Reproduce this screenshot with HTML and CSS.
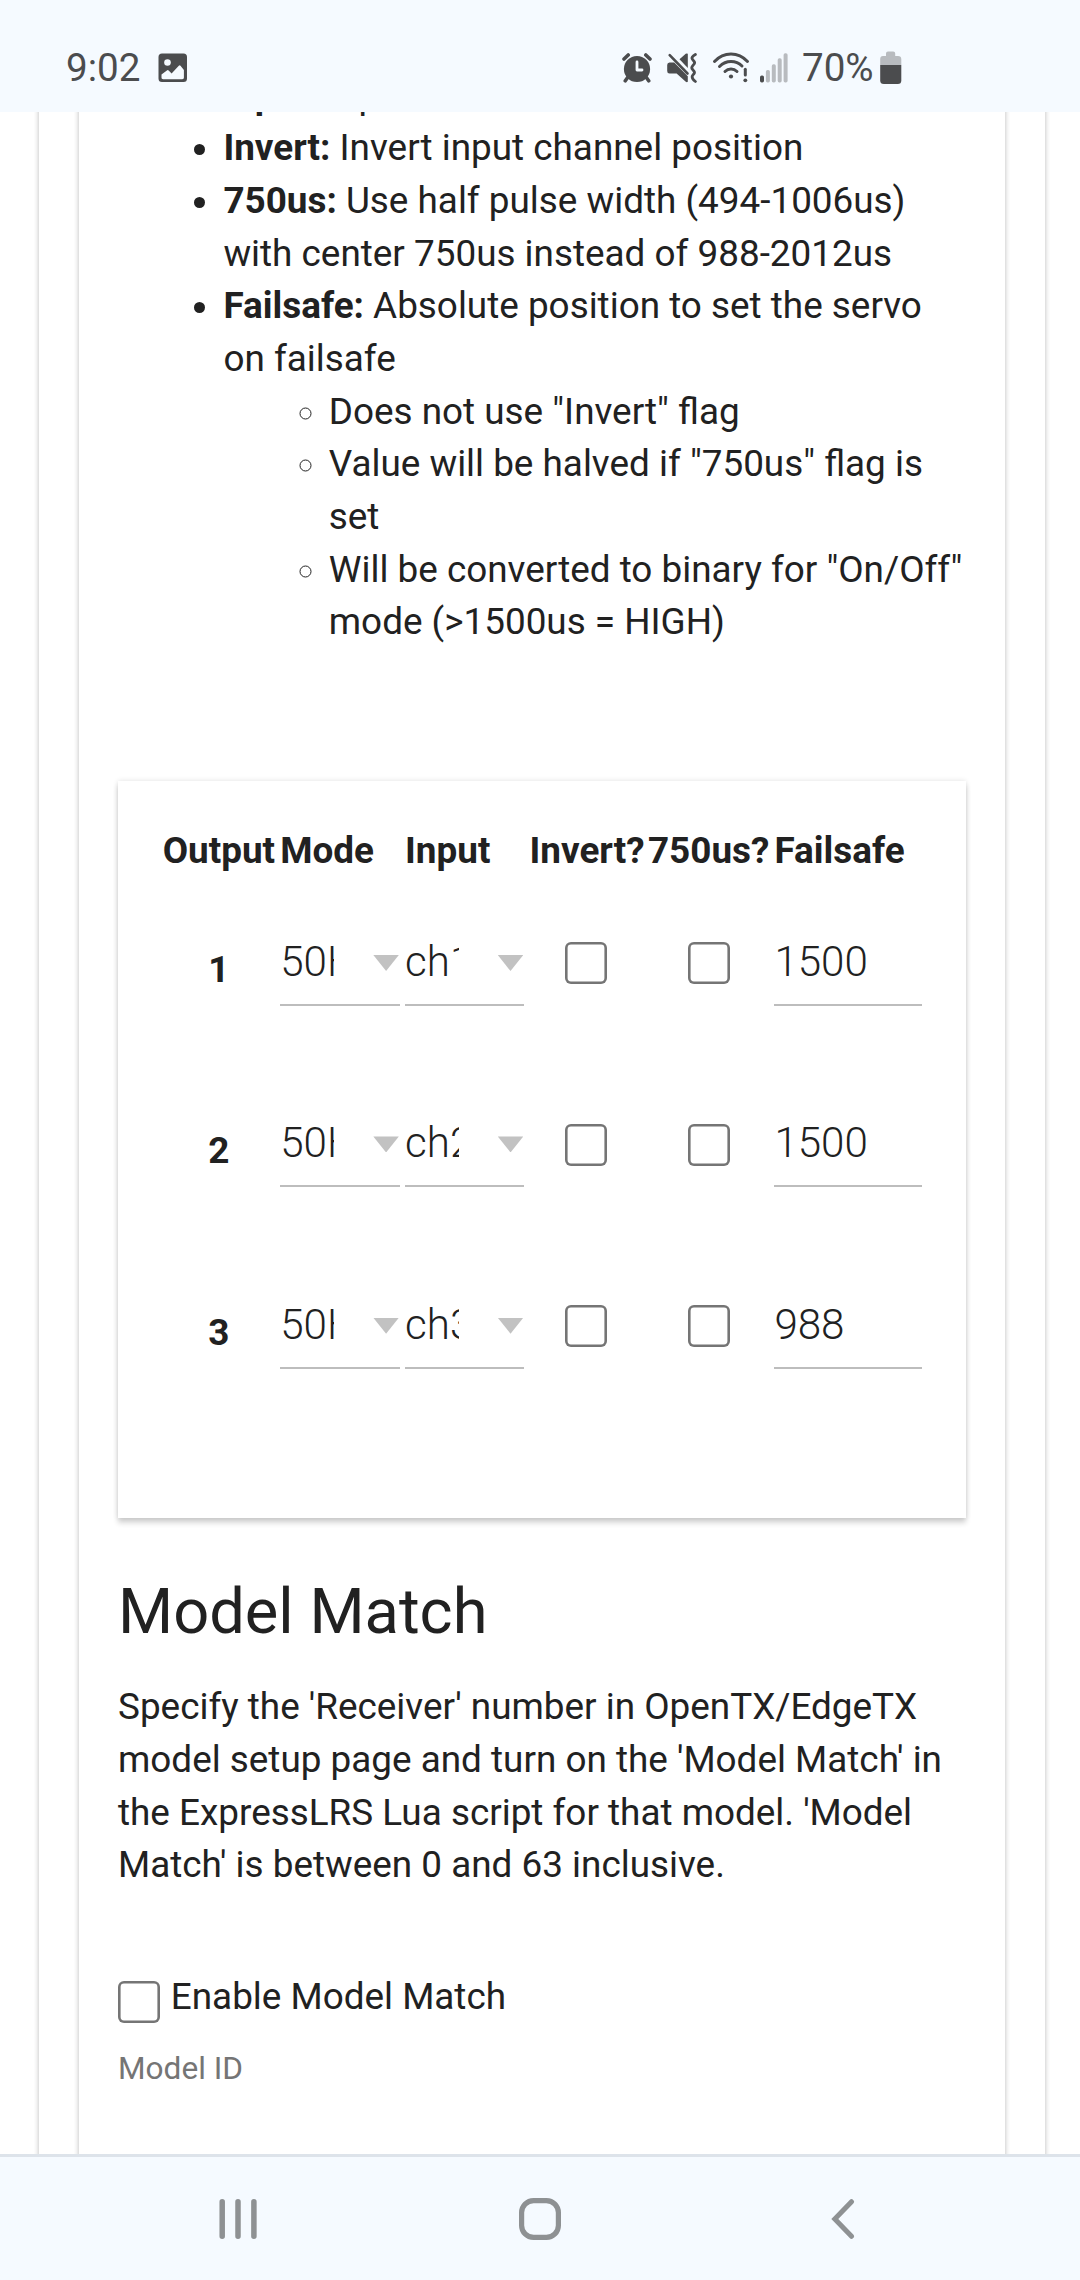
FILE: index.html
```html
<!DOCTYPE html>
<html lang="en">
<head>
<meta charset="utf-8">
<title>ExpressLRS</title>
<link rel="stylesheet" href="styles.css">
</head>
<body>
<header class="status">
  <span class="status-text clock">9:02</span>
  <svg class="ic-photo" width="30" height="30" viewBox="0 0 30 30"><path fill="#4b4c4e" fill-rule="evenodd" d="M4 .5h21.500a3.500 3.500 0 0 1 3.500 3.500v21.500a3.500 3.500 0 0 1-3.500 3.500H4A3.500 3.500 0 0 1 .5 25.500V4A3.500 3.500 0 0 1 4 .5zM3.500 21.500v3c0 1 .6 1.700 1.700 1.700h19c1.100 0 1.700-.7 1.700-1.700V17l-3.400-4.200q-.8-1-1.700 0l-7.200 7.700-3-3q-.8-.8-1.700 0z"/><circle cx="9.500" cy="9.500" r="3.300" fill="#f5faff"/></svg>
  <span class="spacer"></span>
  <svg class="ic-alarm" width="30" height="30" viewBox="0 0 30 30"><circle cx="15" cy="16" r="13.100" fill="#4b4c4e"/><g stroke="#4b4c4e" stroke-width="3.600" stroke-linecap="round" fill="none"><path d="M2 6 6.200 2M28 6l-4.200-4M6 24l-2.700 3.800M24 24l2.700 3.800"/></g><path d="M15 9v8h5" stroke="#f5faff" stroke-width="2.800" stroke-linecap="round" stroke-linejoin="round" fill="none"/></svg>
  <svg class="ic-mute" width="30" height="30" viewBox="0 0 30 30"><g fill="#4b4c4e"><path d="M2.500 9.500h4.700l13.600 13.700v5.600q-.9.800-2 0L9.600 20.500H2.500Q.2 20.500.2 18v-6q0-2.500 2.300-2.500z"/><path d="M12.500 6.200 18.700.8q1.100-.8 2.100 0v14.100z"/></g><path d="M2.700 2.200 20.500 20.500" stroke="#4b4c4e" stroke-width="2.600" stroke-linecap="round"/><path d="M28.400 1.500q-4.600 2.500-3 4.700l1.800 2.400q1 1.500-.6 3l-1 1.200q-1.600 2 0 3.700l1.200 1.500q1.300 1.500 0 3l-1.200 1.500q-1.600 2.600 2.800 6" fill="none" stroke="#4b4c4e" stroke-width="2.800" stroke-linecap="round"/></svg>
  <svg class="ic-wifi" width="38" height="32" viewBox="0 0 38 32"><g fill="none" stroke="#4b4c4e" stroke-width="3" stroke-linecap="round"><path d="M2.500 9.500Q9.500 2 19 2T35.500 9.500M7.500 14.500q5-5 11.500-5t11 4.500M13 19.500q2.500-2.500 6-2.500t6 2.500"/><path d="M33.300 17.200v5.800"/></g><circle cx="19" cy="24.500" r="2.100" fill="#4b4c4e"/><circle cx="33.300" cy="28.300" r="1.900" fill="#4b4c4e"/></svg>
  <svg class="ic-signal" width="28" height="30" viewBox="0 0 28 30"><g fill="#b8bbbf"><rect x="5.900" y="17" width="4" height="12.500" rx="1.700"/><rect x="11.800" y="11.200" width="4" height="18.300" rx="1.700"/><rect x="17.700" y="5.200" width="4" height="24.300" rx="1.700"/><rect x="23.600" y=".2" width="4" height="29.300" rx="1.700"/></g><rect y="22.500" width="4" height="7" rx="1.700" fill="#4b4c4e"/></svg>
  <span class="status-text percent">70%</span>
  <svg class="ic-battery" width="22" height="34" viewBox="0 0 22 34"><path fill="#b8bbbf" d="M3 5h3V2.500Q6 .6 8 .6h5.200q2 0 2 1.900V5H18q3.300 0 3.300 3.300V14H.2V8.300Q.2 5 3 5z"/><path fill="#4b4c4e" d="M.2 14h21.100v15.500q0 3.500-3.500 3.500h-14Q.2 33 .2 29.500z"/></svg>
</header>

<main class="viewport">
  <div class="panel outer">
    <div class="panel inner">
      <ul class="notes">
        <li><b>Input:</b> Input channel from the handset</li>
        <li><b>Invert:</b> Invert input channel position</li>
        <li><b>750us:</b> Use half pulse width (494-1006us)<br>with center 750us instead of 988-2012us</li>
        <li><b>Failsafe:</b> Absolute position to set the servo<br>on failsafe
          <ul>
            <li>Does not use "Invert" flag</li>
            <li>Value will be halved if "750us" flag is<br>set</li>
            <li>Will be converted to binary for "On/Off"<br>mode (&gt;1500us = HIGH)</li>
          </ul>
        </li>
      </ul>

      <section class="panel outputs">
        <div class="row head"><span>Output</span><span>Mode</span><span>Input</span><span>Invert?</span><span>750us?</span><span>Failsafe</span></div>
        <div class="row">
          <b class="num">1</b>
          <div class="field select"><span>50Hz</span><i></i></div>
          <div class="field select"><span>ch1</span><i></i></div>
          <span class="check"></span><span class="check"></span>
          <div class="field">1500</div>
        </div>
        <div class="row">
          <b class="num">2</b>
          <div class="field select"><span>50Hz</span><i></i></div>
          <div class="field select"><span>ch2</span><i></i></div>
          <span class="check"></span><span class="check"></span>
          <div class="field">1500</div>
        </div>
        <div class="row">
          <b class="num">3</b>
          <div class="field select"><span>50Hz</span><i></i></div>
          <div class="field select"><span>ch3</span><i></i></div>
          <span class="check"></span><span class="check"></span>
          <div class="field">988</div>
        </div>
      </section>

      <h2>Model Match</h2>
      <p>Specify the 'Receiver' number in OpenTX/EdgeTX<br>model setup page and turn on the 'Model Match' in<br>the ExpressLRS Lua script for that model. 'Model<br>Match' is between 0 and 63 inclusive.</p>
      <div class="enable"><span class="check"></span><span>Enable Model Match</span></div>
      <div class="label">Model ID</div>
    </div>
  </div>
</main>

<nav class="navbar">
  <svg class="nav-recents" width="38" height="42" viewBox="0 0 38 42"><path d="M3.200 3.700v34.600M19 3.700v34.600M34.900 3.700v34.600" stroke="#8e9193" stroke-width="5.500" stroke-linecap="round"/></svg>
  <svg class="nav-home" width="42" height="42" viewBox="0 0 42 42"><rect x="2.600" y="2.600" width="36.800" height="36.800" rx="12" fill="none" stroke="#8e9193" stroke-width="5.200"/></svg>
  <svg class="nav-back" width="24" height="42" viewBox="0 0 24 42"><path d="M20.500 3.700 3.800 21l16.700 17.300" fill="none" stroke="#8e9193" stroke-width="5" stroke-linecap="round"/></svg>
</nav>
</body>
</html>
```
FILE: styles.css
```css
* { box-sizing: border-box; }

body {
  margin: 0;
  width: 1080px;
  height: 2280px;
  display: flex;
  flex-direction: column;
  overflow: hidden;
  background: #fff;
  color: #212121;
  font-family: Roboto, "Liberation Sans", sans-serif;
  font-size: 36.87px;
  line-height: 52.67px;
}

svg { display: block; flex: none; }

/* Status bar */
.status {
  flex: none;
  height: 112px;
  padding: 24px 178px 0 66px;
  display: flex;
  align-items: center;
  background: #f5faff;
}
.status-text { color: #4b4c4e; font-size: 38.600px; line-height: 44px; }
.clock { width: 91.500px; }
.percent { width: 78px; }
.spacer { flex: 1; }
.ic-mute { margin-left: 15px; }
.ic-wifi { margin-left: 15px; }
.ic-signal { margin: 0 14.500px 0 9.500px; }

/* Scrolled page */
.viewport { flex: 1; min-height: 0; overflow: hidden; padding: 0 35px 0 39px; }
.panel {
  background: #fff;
  box-shadow: 0 5.270px 5.270px rgba(0, 0, 0, .16), 0 0 5.270px rgba(0, 0, 0, .12);
}
.outer { height: 2200px; margin-top: -60px; padding: 0 40px; }
.inner { height: 2200px; padding: 17.600px 39px 0; white-space: nowrap; }

.notes { margin: 0; }
ul { margin: 0; padding-left: 105.400px; }

/* Outputs table */
.outputs {
  width: 848px;
  height: 737px;
  margin-top: 132px;
  padding: 44.300px 0 0 44.700px;
}
.row {
  display: grid;
  grid-template-columns: 112.300px 119.600px 119.200px 113.200px 121.200px 147.700px;
  column-gap: 5.250px;
  align-items: start;
  height: 181.300px;
}
.head { height: 97.300px; font-weight: 700; }
.num { padding-top: 21.500px; text-align: center; }
.field {
  height: 83.600px;
  padding-top: 14.500px;
  border-bottom: 2px solid #bdbdbd;
  font-size: 42.140px;
  line-height: 49.500px;
  font-weight: 300;
}
.select { display: flex; justify-content: space-between; }
.select span { width: 53.500px; height: 52px; overflow: hidden; }
.select i {
  width: 25.500px;
  height: 16px;
  margin: 18px 1px 0 0;
  background: #c2c2c2;
  clip-path: polygon(0 0, 100% 0, 50% 100%);
}
.check {
  flex: none;
  width: 42px;
  height: 42px;
  border-radius: 6px;
  box-shadow: inset 0 0 0 2.600px #757575;
}
.row .check { margin-top: 19.700px; justify-self: center; }

/* Model match */
h2 { margin: 50.600px 0 28.300px; font-size: 63.200px; line-height: 84.300px; font-weight: 400; }
p { margin: 0; }
.enable { display: flex; margin-top: 79.300px; gap: 10.800px; }
.enable .check { margin-top: 10px; }
.label { margin-top: 26px; font-size: 31.600px; line-height: 37px; color: #757575; }

/* Navigation bar */
.navbar {
  flex: none;
  height: 126px;
  padding: 1px 225px 0 219px;
  border-top: 3px solid #dde3ea;
  background: #f5faff;
  display: flex;
  align-items: center;
}
.nav-recents { margin-right: 262px; }
.nav-home { margin-right: 270px; }
```
